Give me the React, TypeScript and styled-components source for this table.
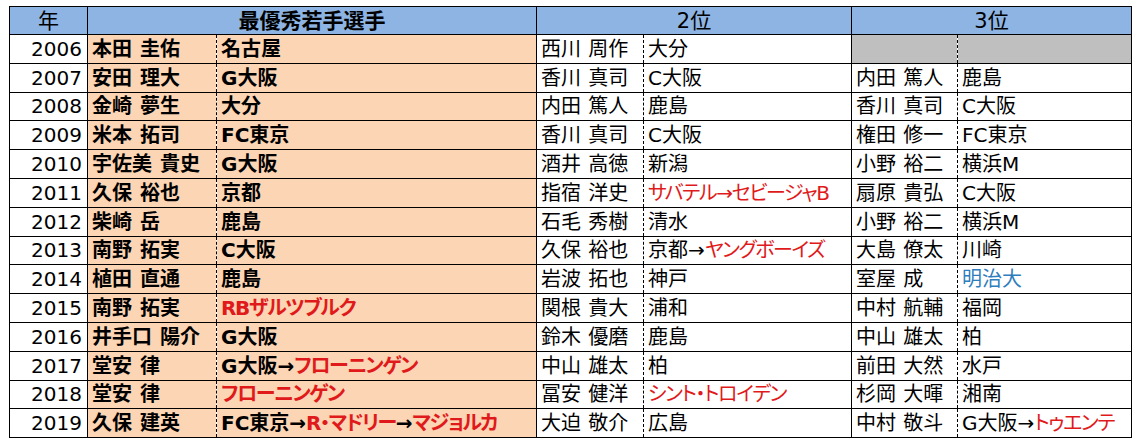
import React from "react";
import styled, { createGlobalStyle } from "styled-components";

type Tone = "plain" | "red" | "blue";

interface IPart {
  text: string;
  tone?: Tone;
}

interface IRow {
  year: number;
  name: string;
  club: IPart[];
  second: [string, IPart[]];
  third: [string, IPart[]] | null;
}

const p = (text: string, tone: Tone = "plain"): IPart => ({ text, tone });

const rows: IRow[] = [
  { year: 2006, name: "本田 圭佑", club: [p("名古屋")], second: ["西川 周作", [p("大分")]], third: null },
  { year: 2007, name: "安田 理大", club: [p("G大阪")], second: ["香川 真司", [p("C大阪")]], third: ["内田 篤人", [p("鹿島")]] },
  { year: 2008, name: "金崎 夢生", club: [p("大分")], second: ["内田 篤人", [p("鹿島")]], third: ["香川 真司", [p("C大阪")]] },
  { year: 2009, name: "米本 拓司", club: [p("FC東京")], second: ["香川 真司", [p("C大阪")]], third: ["権田 修一", [p("FC東京")]] },
  { year: 2010, name: "宇佐美 貴史", club: [p("G大阪")], second: ["酒井 高徳", [p("新潟")]], third: ["小野 裕二", [p("横浜M")]] },
  { year: 2011, name: "久保 裕也", club: [p("京都")], second: ["指宿 洋史", [p("サバテル→セビージャB", "red")]], third: ["扇原 貴弘", [p("C大阪")]] },
  { year: 2012, name: "柴崎 岳", club: [p("鹿島")], second: ["石毛 秀樹", [p("清水")]], third: ["小野 裕二", [p("横浜M")]] },
  { year: 2013, name: "南野 拓実", club: [p("C大阪")], second: ["久保 裕也", [p("京都→"), p("ヤングボーイズ", "red")]], third: ["大島 僚太", [p("川崎")]] },
  { year: 2014, name: "植田 直通", club: [p("鹿島")], second: ["岩波 拓也", [p("神戸")]], third: ["室屋 成", [p("明治大", "blue")]] },
  { year: 2015, name: "南野 拓実", club: [p("RBザルツブルク", "red")], second: ["関根 貴大", [p("浦和")]], third: ["中村 航輔", [p("福岡")]] },
  { year: 2016, name: "井手口 陽介", club: [p("G大阪")], second: ["鈴木 優磨", [p("鹿島")]], third: ["中山 雄太", [p("柏")]] },
  { year: 2017, name: "堂安 律", club: [p("G大阪→"), p("フローニンゲン", "red")], second: ["中山 雄太", [p("柏")]], third: ["前田 大然", [p("水戸")]] },
  { year: 2018, name: "堂安 律", club: [p("フローニンゲン", "red")], second: ["冨安 健洋", [p("シント・トロイデン", "red")]], third: ["杉岡 大暉", [p("湘南")]] },
  { year: 2019, name: "久保 建英", club: [p("FC東京→"), p("R・マドリー", "red"), p("→"), p("マジョルカ", "red")], second: ["大迫 敬介", [p("広島")]], third: ["中村 敬斗", [p("G大阪→"), p("トゥエンテ", "red")]] },
];

const GlobalStyle = createGlobalStyle`
  body {
    margin: 0;
    background: #ffffff;
    font-family: "DejaVu Sans", "Noto Sans CJK JP", sans-serif;
    font-feature-settings: "palt";
  }
`;

const Page = styled.div`
  padding: 6px 0 0 9px;
`;

const Table = styled.table`
  width: 1123px;
  table-layout: fixed;
  border-collapse: collapse;
  font-size: 20px;
  color: #000;
`;

const HeadCell = styled.th`
  height: 27px;
  padding: 0;
  background: #8db4e2;
  border: 1px solid #000;
  font-size: 21px;
  font-weight: 400;
  text-align: center;
  line-height: 26px;
`;

const BoldHead = styled(HeadCell)`
  font-weight: 700;
`;

const Row = styled.tr`
  height: 28.8px;
`;

const YearCell = styled.td`
  padding: 0 5px 0 0;
  border: 1px solid #000;
  text-align: right;
  line-height: 26px;
  white-space: nowrap;
`;

const Cell = styled.td<{ $fill?: "orange" | "gray"; $side: "name" | "club" }>`
  padding: 0 0 0 4px;
  border-top: 1px solid #000;
  border-bottom: 1px solid #000;
  border-left: ${({ $side }) => ($side === "club" ? "1px dashed #000" : "1px solid #000")};
  border-right: ${({ $side }) => ($side === "name" ? "1px dashed #000" : "1px solid #000")};
  background: ${({ $fill }) => ($fill === "orange" ? "#fcd5b4" : $fill === "gray" ? "#bfbfbf" : "#ffffff")};
  font-weight: ${({ $fill }) => ($fill === "orange" ? 700 : 400)};
  word-spacing: ${({ $side }) => ($side === "name" ? "1px" : "0")};
  line-height: 26px;
  white-space: nowrap;
  overflow: hidden;
`;

// katakana club names sit tighter in the sheet than in Noto, pull them in a bit
const Part = styled.span<{ $tone: Tone }>`
  color: ${({ $tone }) => ($tone === "red" ? "#e01a1a" : $tone === "blue" ? "#2e7dbd" : "#000")};
  letter-spacing: ${({ $tone }) => ($tone === "red" ? "-1.4px" : "0")};
`;

const Club = ({ parts }: { parts: IPart[] }) => (
  <>
    {parts.map((part, i) => (
      <Part key={i} $tone={part.tone ?? "plain"}>
        {part.text}
      </Part>
    ))}
  </>
);

const App = () => (
  <Page>
    <GlobalStyle />
    <Table>
      <colgroup>
        <col style={{ width: 78 }} />
        <col style={{ width: 129 }} />
        <col style={{ width: 320 }} />
        <col style={{ width: 107 }} />
        <col style={{ width: 208 }} />
        <col style={{ width: 106 }} />
        <col style={{ width: 174 }} />
      </colgroup>
      <thead>
        <tr>
          <HeadCell>年</HeadCell>
          <BoldHead colSpan={2}>最優秀若手選手</BoldHead>
          <HeadCell colSpan={2}>2位</HeadCell>
          <HeadCell colSpan={2}>3位</HeadCell>
        </tr>
      </thead>
      <tbody>
        {rows.map((row) => (
          <Row key={row.year}>
            <YearCell>{row.year}</YearCell>
            <Cell $fill="orange" $side="name">{row.name}</Cell>
            <Cell $fill="orange" $side="club">
              <Club parts={row.club} />
            </Cell>
            <Cell $side="name">{row.second[0]}</Cell>
            <Cell $side="club">
              <Club parts={row.second[1]} />
            </Cell>
            {row.third ? (
              <>
                <Cell $side="name">{row.third[0]}</Cell>
                <Cell $side="club">
                  <Club parts={row.third[1]} />
                </Cell>
              </>
            ) : (
              <>
                <Cell $fill="gray" $side="name" />
                <Cell $fill="gray" $side="club" />
              </>
            )}
          </Row>
        ))}
      </tbody>
    </Table>
  </Page>
);

export default App;
